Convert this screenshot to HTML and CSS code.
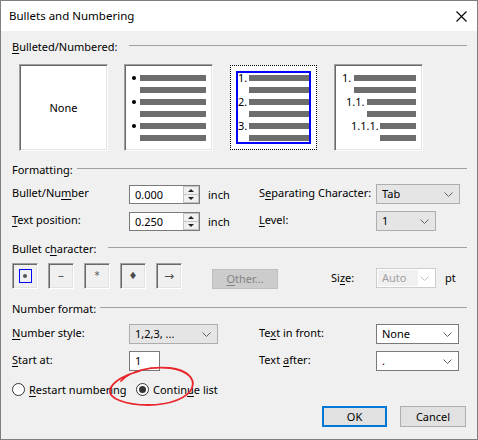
FILE: index.html
```html
<!DOCTYPE html>
<html>
<head>
<meta charset="utf-8">
<link rel="stylesheet" href="styles.css">
</head>
<body>
<div class="window">
  <div class="titlebar">
    <span class="title">Bullets and Numbering</span>
    <svg class="close" width="11" height="11" viewBox="0 0 11 11"><path d="M0.5 0.5 L10.5 10.5 M10.5 0.5 L0.5 10.5" stroke="#000" stroke-width="1.1" fill="none"/></svg>
  </div>
  <div class="content">
    <div class="gt"><span class="gt-label w1"><u>B</u>ulleted/Numbered:</span><span class="gt-line"></span></div>
    <div class="boxes">
      <div class="box box-none">None</div>
      <div class="box box-bul">
        <div class="pr b"><span class="mk"><i class="dot"></i></span><span class="bar"></span></div>
        <div class="pr b ind"><span class="bar"></span></div>
        <div class="pr b"><span class="mk"><i class="dot"></i></span><span class="bar"></span></div>
        <div class="pr b ind"><span class="bar"></span></div>
        <div class="pr b"><span class="mk"><i class="dot"></i></span><span class="bar"></span></div>
        <div class="pr b ind"><span class="bar"></span></div>
      </div>
      <div class="box box-sel">
        <div class="focus">
          <div class="rows">
            <div class="pr n"><span class="mk">1.</span><span class="bar"></span></div>
            <div class="pr n ind"><span class="bar"></span></div>
            <div class="pr n"><span class="mk">2.</span><span class="bar"></span></div>
            <div class="pr n ind"><span class="bar"></span></div>
            <div class="pr n"><span class="mk">3.</span><span class="bar"></span></div>
            <div class="pr n ind"><span class="bar"></span></div>
          </div>
        </div>
      </div>
      <div class="box box-multi">
        <div class="pr l1"><span class="mk">1.</span><span class="bar"></span></div>
        <div class="pr l1 ind"><span class="bar"></span></div>
        <div class="pr l2"><span class="mk">1.1.</span><span class="bar"></span></div>
        <div class="pr l2 ind"><span class="bar"></span></div>
        <div class="pr l3"><span class="mk">1.1.1.</span><span class="bar"></span></div>
        <div class="pr l3 ind"><span class="bar"></span></div>
      </div>
    </div>

    <div class="gt sec"><span class="gt-label w2">Formatting:</span><span class="gt-line"></span></div>
    <div class="form">
      <span class="lbl">Bullet/Nu<u>m</u>ber</span>
      <div class="cell">
        <div class="spin"><span class="spin-val">0.000</span><span class="spin-btns"><span class="sb"><i class="up"></i></span><span class="sb"><i class="down"></i></span></span></div>
        <span class="unit">inch</span>
      </div>
      <span class="lbl">S<u>e</u>parating Character:</span>
      <div class="cell"><div class="combo gray w84"><span>Tab</span><svg class="chev" width="9" height="5" viewBox="0 0 9 5"><polyline points="0.5,0.5 4.5,4.5 8.5,0.5" fill="none" stroke="#606060"/></svg></div></div>

      <span class="lbl"><u>T</u>ext position:</span>
      <div class="cell">
        <div class="spin"><span class="spin-val">0.250</span><span class="spin-btns"><span class="sb"><i class="up"></i></span><span class="sb"><i class="down"></i></span></span></div>
        <span class="unit">inch</span>
      </div>
      <span class="lbl"><u>L</u>evel:</span>
      <div class="cell"><div class="combo gray w60"><span>1</span><svg class="chev" width="9" height="5" viewBox="0 0 9 5"><polyline points="0.5,0.5 4.5,4.5 8.5,0.5" fill="none" stroke="#606060"/></svg></div></div>
    </div>

    <div class="gt sec3"><span class="gt-label w3">Bullet c<u>h</u>aracter:</span><span class="gt-line"></span></div>
    <div class="bul-row">
      <div class="bb"><span class="bb-focus"><i class="bdot"></i></span></div>
      <div class="bb"><span class="glyph">–</span></div>
      <div class="bb"><span class="glyph small">*</span></div>
      <div class="bb"><span class="glyph small">♦</span></div>
      <div class="bb"><span class="glyph">→</span></div>
      <div class="other"><u>O</u>ther...</div>
      <span class="size-lbl">Si<u>z</u>e:</span>
      <div class="combo dis w60"><span class="auto">Auto</span><svg class="chev" width="9" height="5" viewBox="0 0 9 5"><polyline points="0.5,0.5 4.5,4.5 8.5,0.5" fill="none" stroke="#c0c0c0"/></svg></div>
      <span class="pt">pt</span>
    </div>

    <div class="gt sec4"><span class="gt-label w4">Number format:</span><span class="gt-line"></span></div>
    <div class="form">
      <span class="lbl"><u>N</u>umber style:</span>
      <div class="cell"><div class="combo gray w89"><span>1,2,3, ...</span><svg class="chev" width="9" height="5" viewBox="0 0 9 5"><polyline points="0.5,0.5 4.5,4.5 8.5,0.5" fill="none" stroke="#606060"/></svg></div></div>
      <span class="lbl">Te<u>x</u>t in front:</span>
      <div class="cell"><div class="combo white w83"><span>None</span><svg class="chev" width="9" height="5" viewBox="0 0 9 5"><polyline points="0.5,0.5 4.5,4.5 8.5,0.5" fill="none" stroke="#606060"/></svg></div></div>

      <span class="lbl"><u>S</u>tart at:</span>
      <div class="cell"><div class="input">1</div></div>
      <span class="lbl">Text <u>a</u>fter:</span>
      <div class="cell"><div class="combo white w83"><span>.</span><svg class="chev" width="9" height="5" viewBox="0 0 9 5"><polyline points="0.5,0.5 4.5,4.5 8.5,0.5" fill="none" stroke="#606060"/></svg></div></div>
    </div>

    <div class="radios">
      <label class="radio-item first"><span class="radio"></span><span><u>R</u>estart numbering</span></label>
      <label class="radio-item"><span class="radio on"></span><span>Contin<u>u</u>e list</span></label>
    </div>

    <div class="buttons">
      <div class="btn ok">OK</div>
      <div class="btn cancel">Cancel</div>
    </div>
  </div>
  <svg class="annot" width="478" height="440" viewBox="0 0 478 440">
    <path d="M121 381 C130 371, 150 366, 170 368 C186 370, 196 378, 192 388 C188 398, 170 405, 148 405 C125 405, 108 398, 110 390 C112 382, 124 375, 140 371" fill="none" stroke="#e8262b" stroke-width="1.8" stroke-linecap="round"/>
  </svg>
</div>
</body>
</html>
```

FILE: styles.css
```css
* { box-sizing: border-box; }
body {
  margin: 0;
  font-family: "Noto Sans", "Open Sans", sans-serif;
  font-size: 11px;
  color: #000;
}
u { text-decoration: underline; text-underline-offset: 2px; }
.window {
  width: 478px;
  height: 440px;
  border: 1px solid #7f7f7f;
  background: #f0f0f0;
  position: relative;
  overflow: hidden;
}
.titlebar {
  height: 30px;
  background: #fff;
  display: flex;
  align-items: center;
  justify-content: space-between;
  padding: 0 10px 0 8px;
  font-size: 11.5px;
}
.title { line-height: 16px; }
.close { display: block; }

.content { padding: 8px 10px 0 11px; }

.gt { display: flex; height: 16px; line-height: 16px; }
.gt-label { white-space: nowrap; }
.gt-line { flex: 1; height: 1px; background: #a0a0a0; margin-top: 6px; }
.w1 { width: 117px; }
.w2 { width: 65px; }
.w3 { width: 96px; }
.w4 { width: 88px; }

.boxes { display: flex; gap: 16px; padding-left: 7px; margin-top: 9px; }
.box {
  width: 89px;
  height: 87px;
  background: #fff;
  border: 1px solid;
  border-color: #a0a0a0 #fff #fff #a0a0a0;
  box-shadow: inset 1px 1px 0 #696969, inset -1px -1px 0 #e3e3e3;
}
.box-none { display: flex; align-items: center; justify-content: center; }
.box-bul, .box-multi { padding: 7px 6px 0 0; }
.pr { display: flex; align-items: center; height: 12px; line-height: 12px; white-space: nowrap; color: #000; }
.bar { flex: 1; height: 6px; background: #6d6d6d; }
.mk { flex: none; }
.pr.b { padding-left: 7px; }
.pr.b .mk { width: 8px; display: flex; align-items: center; }
.pr.b.ind { padding-left: 15px; }
.dot { display: block; width: 4px; height: 4px; border-radius: 50%; background: #000; }

.box-sel {
  width: 87px;
  height: 85px;
  margin: 1px;
  border: 1px dotted #000;
  box-shadow: none;
}
.focus { margin: 5px; height: calc(100% - 10px); border: 2px solid #0000ff; }
.rows { margin-top: -1px; }
.pr.n { padding-left: 0; }
.pr.n .mk { width: 11px; }
.pr.n.ind { padding-left: 11px; }

.pr.l1 { padding-left: 7px; }
.pr.l1 .mk { width: 12px; }
.pr.l1.ind { padding-left: 19px; }
.pr.l2 { padding-left: 11px; }
.pr.l2 .mk { width: 21px; }
.pr.l2.ind { padding-left: 32px; }
.pr.l3 { padding-left: 16px; }
.pr.l3 .mk { width: 29px; }
.pr.l3.ind { padding-left: 45px; }

.sec { margin-top: 11px; }
.form {
  display: grid;
  grid-template-columns: 117px 130px 117px auto;
  grid-auto-rows: 20px;
  row-gap: 7px;
  align-items: center;
  margin-top: 6px;
}
.lbl { white-space: nowrap; line-height: 16px; margin-top: -2px; }
.cell { display: flex; align-items: center; height: 20px; }
.spin {
  width: 71px;
  height: 19px;
  display: flex;
  border: 1px solid #7a7a7a;
  background: #fff;
}
.spin-val { flex: 1; padding-left: 5px; line-height: 17px; }
.spin-btns { width: 16px; display: flex; flex-direction: column; }
.sb {
  flex: 1;
  display: flex;
  align-items: center;
  justify-content: center;
  background: #f0f0f0;
  border: 1px solid #c4c4c4;
}
.sb + .sb { border-top: none; }
.up, .down { display: block; width: 0; height: 0; border-left: 3px solid transparent; border-right: 3px solid transparent; }
.up { border-bottom: 3px solid #222; }
.down { border-top: 3px solid #222; }
.unit { margin-left: 8px; }

.combo {
  height: 20px;
  display: flex;
  align-items: center;
  justify-content: space-between;
  padding: 0 6px 0 5px;
  border: 1px solid #adadad;
  line-height: 16px;
  white-space: nowrap;
}
.combo.gray { background: #e5e5e5; }
.combo.white { background: #fff; border-color: #7a7a7a; }
.combo.dis { background: #fff; border-color: #cccccc; padding: 1px 6px 1px 1px; align-items: stretch; }
.combo.dis .chev { align-self: center; }
.auto { width: 40px; background: #f0f0f0; color: #a0a0a0; padding-left: 4px; line-height: 16px; }
.w84 { width: 84px; }
.w60 { width: 60px; }
.w89 { width: 89px; }
.w83 { width: 83px; }
.chev { display: block; flex: none; }

.input {
  width: 31px;
  height: 20px;
  border: 1px solid #7a7a7a;
  background: #fff;
  padding-left: 5px;
  line-height: 18px;
}

.sec3 { margin-top: 10px; }
.bul-row { display: flex; align-items: flex-end; height: 26px; margin-top: 6px; }
.bb {
  width: 26px;
  height: 26px;
  margin-right: 10px;
  border: 1px solid;
  border-color: #a0a0a0 #fff #fff #a0a0a0;
  box-shadow: inset 1px 1px 0 #696969, inset -1px -1px 0 #e3e3e3;
  display: flex;
  align-items: center;
  justify-content: center;
  color: #4a4a4a;
}
.bb-focus {
  width: 13px;
  height: 14px;
  border: 1px solid #0000ff;
  display: flex;
  align-items: center;
  justify-content: center;
}
.bdot { display: block; width: 4px; height: 4px; border-radius: 50%; background: #555; }
.glyph { font-family: "DejaVu Sans", sans-serif; font-size: 12px; line-height: 12px; }
.glyph.small { font-size: 10px; }
.other {
  width: 66px;
  height: 20px;
  margin-left: 20px;
  background: #cccccc;
  border: 1px solid #bfbfbf;
  color: #838383;
  text-align: center;
  line-height: 18px;
}
.size-lbl { margin-left: 53px; width: 45px; line-height: 20px; margin-bottom: 1px; }
.bul-row .combo { margin-bottom: 1px; }
.pt { margin-left: 9px; line-height: 20px; margin-bottom: 1px; }

.sec4 { margin-top: 12px; }
.sec4 + .form { margin-top: 7px; }

.radios { display: flex; align-items: center; height: 16px; margin-top: 10px; }
.radio-item { display: flex; align-items: center; white-space: nowrap; }
.radio-item.first { width: 124px; }
.radio {
  width: 13px;
  height: 13px;
  border: 1px solid #333;
  border-radius: 50%;
  background: #fff;
  margin-right: 4px;
  display: flex;
  align-items: center;
  justify-content: center;
  flex: none;
}
.radio.on::after { content: ""; width: 7px; height: 7px; border-radius: 50%; background: #333; }

.buttons { display: flex; justify-content: flex-end; gap: 13px; margin-top: 9px; padding-right: 1px; }
.btn {
  height: 21px;
  background: #e1e1e1;
  display: flex;
  align-items: center;
  justify-content: center;
}
.btn.ok { width: 65px; border: 2px solid #0078d7; }
.btn.cancel { width: 66px; border: 1px solid #adadad; }

.annot { position: absolute; left: -1px; top: -1px; pointer-events: none; }
```
